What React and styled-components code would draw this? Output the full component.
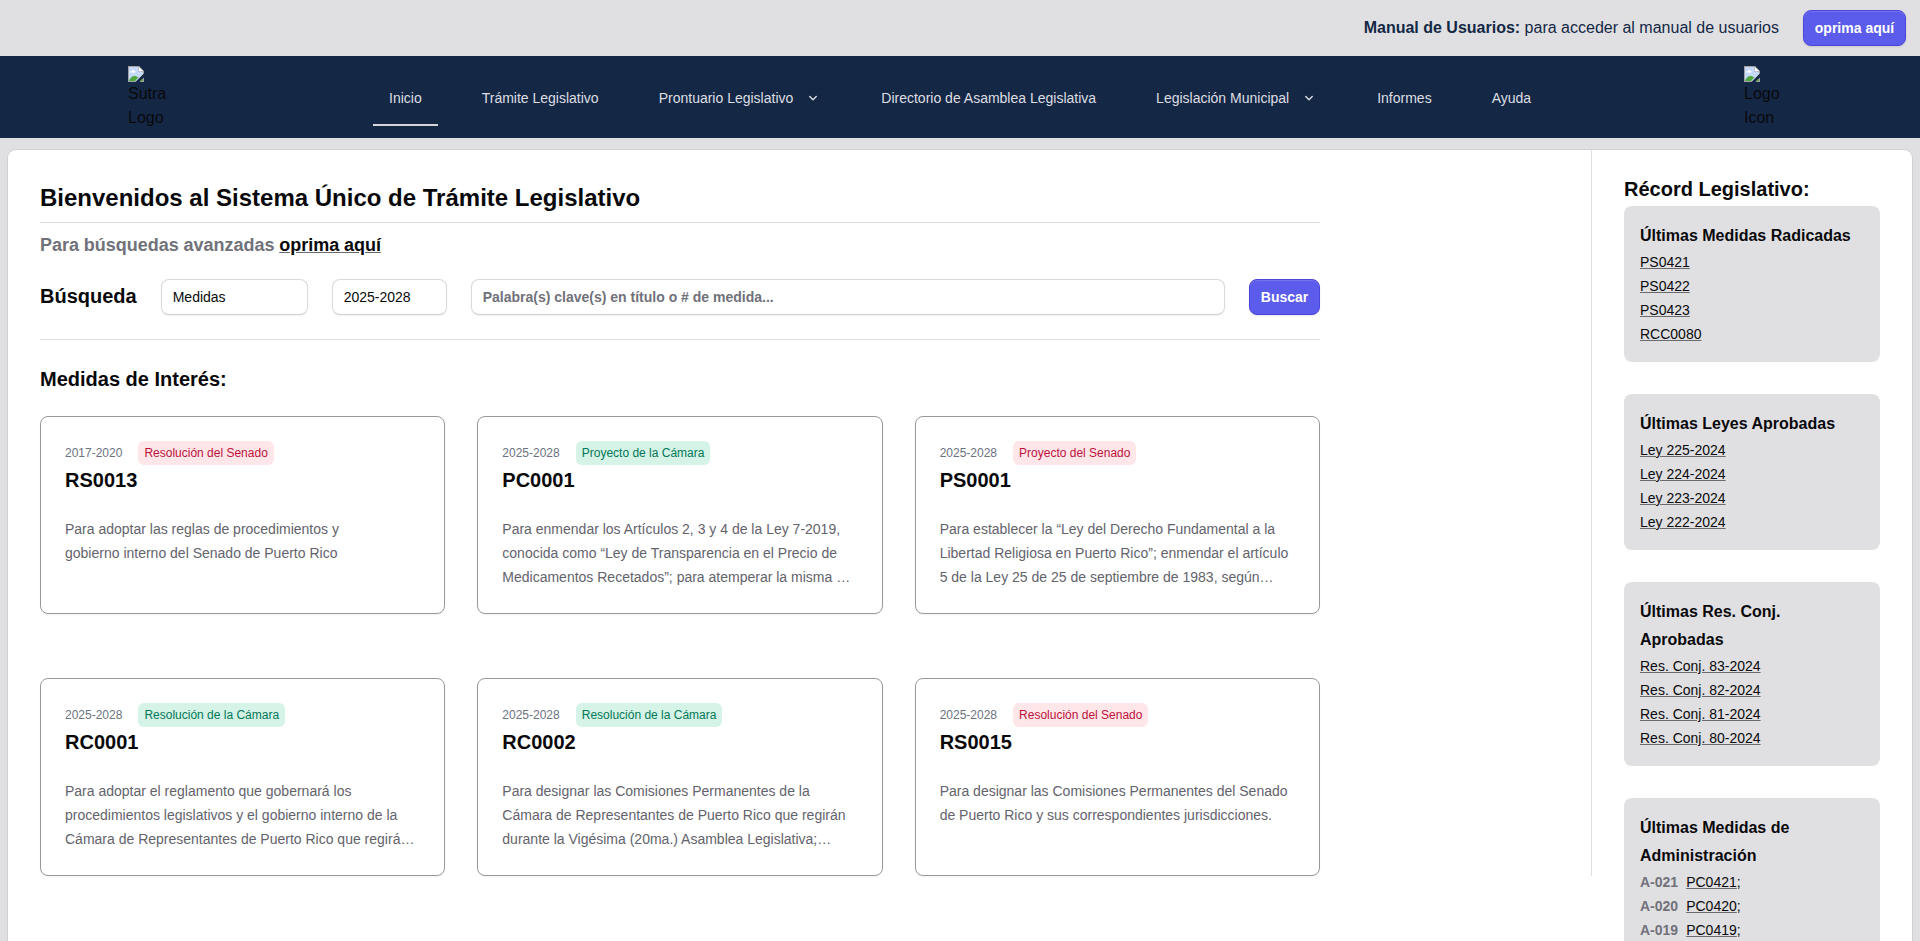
import React from "react";
import styled, { createGlobalStyle } from "styled-components";

const Global = createGlobalStyle`
  *, *::before, *::after { box-sizing: border-box; }
  html, body { margin: 0; padding: 0; }
  body {
    height: 941px;
    overflow: hidden;
    background: #e0e0e2;
    color: #09090b;
    font-family: "Liberation Sans", Arial, Helvetica, sans-serif;
    font-size: 16px;
    line-height: 24px;
    -webkit-font-smoothing: antialiased;
  }
  h1, h2, h3, p, ul { margin: 0; padding: 0; }
  ul { list-style: none; }
  button, input { font-family: inherit; }
`;

const Page = styled.div`
  display: flex;
  flex-direction: column;
  height: 941px;
  overflow: hidden;
`;

const TopBar = styled.div`
  display: flex;
  flex: none;
  align-items: center;
  justify-content: flex-end;
  gap: 24px;
  height: 56px;
  padding-right: 14px;
  color: #142846;
`;

const Button = styled.button`
  height: 36px;
  width: ${(p) => p.$width}px;
  padding: 0;
  border: 1px solid #4d46dd;
  border-radius: 8px;
  background: #5b5bec;
  box-shadow: inset 0 1px 0 rgba(255, 255, 255, 0.15), 0 1px 2px rgba(9, 9, 11, 0.1);
  color: #fff;
  font-size: 14px;
  font-weight: 700;
  line-height: 24px;
`;

const NavBar = styled.header`
  display: flex;
  flex: none;
  height: 82px;
  padding: 10px 128px 0;
  background: #142846;
`;

const LogoBox = styled.div`
  display: flex;
  flex-direction: column;
  flex: none;
  width: ${(p) => p.$width}px;
  line-height: 24px;

  svg { display: block; }
`;

const Nav = styled.nav`
  display: flex;
  flex: 1;
  gap: 28px;
  height: 60px;
  padding-left: 205px;
`;

const NavItem = styled.a`
  display: flex;
  align-items: center;
  gap: 12px;
  height: 60px;
  padding: 6px 16px 0;
  border-bottom: 2px solid ${(p) => (p.$active ? "#d6d6da" : "transparent")};
  color: #dedee2;
  font-size: 14px;
  white-space: nowrap;
`;

const Panel = styled.main`
  display: flex;
  flex: none;
  align-items: flex-start;
  height: 900px;
  margin: 12px 8px 0;
  border-radius: 8px;
  background: #fff;
  box-shadow: 0 0 0 1px #d0d0d3;
`;

const Content = styled.section`
  flex: none;
  width: 1584px;
  height: 726px;
  padding: 32px 0 0 32px;
  border-right: 1px solid #e0e0e2;
`;

const Column = styled.div`
  width: 1280px;
`;

const Title = styled.h1`
  height: 41px;
  border-bottom: 1px solid #dedee0;
  font-size: 24px;
  line-height: 32px;
`;

const Subtitle = styled.p`
  padding-top: 6px;
  color: #71717a;
  font-size: 18px;
  font-weight: 700;
  line-height: 32px;
  word-spacing: -0.3px;

  a { color: #09090b; text-decoration: underline; text-decoration-color: #6b6b6d; }
`;

const SearchRow = styled.div`
  display: flex;
  align-items: center;
  gap: 24px;
  height: 79px;
  padding-bottom: 7px;
  border-bottom: 1px solid #dedee0;
`;

const SectionTitle = styled.h2`
  font-size: 20px;
  line-height: 32px;
  ${(p) => p.$raised && "margin-bottom: 2px;"}
  ${(p) => p.$spaced && "padding-top: 23px;"}
`;

const Field = styled.div`
  flex: ${(p) => (p.$width ? "none" : 1)};
  width: ${(p) => (p.$width ? `${p.$width}px` : "auto")};
  height: 36px;
  padding: 5px 11px;
  border: 1px solid #dadadc;
  border-bottom-color: #cfcfd2;
  border-radius: 8px;
  background: #fff;
  box-shadow: 0 1px 2px rgba(0, 0, 0, 0.06);
  color: ${(p) => (p.$hint ? "#71717a" : "#09090b")};
  font-size: 14px;
  font-weight: ${(p) => (p.$hint ? 700 : 400)};
  line-height: 24px;
`;

const Cards = styled.div`
  display: grid;
  grid-template-columns: repeat(3, 1fr);
  gap: 64px 32px;
  padding-top: 21px;
`;

const Card = styled.article`
  height: 198px;
  padding: 24px;
  border: 1px solid #97979d;
  border-radius: 8px;
  box-shadow: 0 1px 2px rgba(0, 0, 0, 0.05);
`;

const CardMeta = styled.div`
  display: flex;
  align-items: center;
  gap: 16px;
  color: #6b7280;
  font-size: 12px;
`;

const Badge = styled.span`
  padding: 0 6px;
  border-radius: 6px;
  background: ${(p) => (p.$tone === "rose" ? "#ffe6e9" : "#d5f3e7")};
  color: ${(p) => (p.$tone === "rose" ? "#be123c" : "#047857")};
`;

const CardTitle = styled.h3`
  margin-bottom: 21px;
  font-size: 20px;
  line-height: 31px;
`;

const CardText = styled.p`
  color: #63636c;
  font-size: 14px;
  white-space: nowrap;
`;

const Sidebar = styled.aside`
  flex: 1;
  padding: 23px 32px 0;
`;

const Boxes = styled.div`
  display: flex;
  flex-direction: column;
  gap: 32px;
  padding-top: 1px;
`;

const Box = styled.section`
  padding: 16px;
  border-radius: 8px;
  background: #e0e0e2;
`;

const BoxTitle = styled.h3`
  font-size: 16px;
  line-height: 28px;
`;

const BoxItem = styled.li`
  display: flex;
  font-size: 14px;

  a { text-decoration: underline; text-decoration-color: #6b6b6d; }
`;

const Code = styled.span`
  margin-right: 8px;
  color: #71717a;
  font-weight: 700;
`;

const BrokenImage = () => (
  <svg width="16" height="16" viewBox="0 0 16 16">
    <path d="M0 0h11l5 5v2.500L7.500 16H0zM16 11.500V16h-4.500z" fill="#a3a3a3" />
    <path d="M1 1h9.500v4.500H15V8l-7 7H1z" fill="#c6d9f8" />
    <path d="M11 1l4 4h-4z" fill="#fff" />
    <path d="M2.500 6.500V5h1.500V4h2v1h1.500v1.500z" fill="#fff" />
    <path d="M1 15c.8-3 3-5 5.500-5 1.500 0 2.800.5 3.800 1.600L7 15zM12 15l2.200-2.200L15 15z" fill="#4fa83d" />
  </svg>
);

const Chevron = () => (
  <svg width="16" height="16" viewBox="0 0 16 16" fill="none" stroke="#dedee2" strokeWidth="1.4" strokeLinecap="round" strokeLinejoin="round">
    <path d="M4.750 6.500L8 9.750l3.250-3.250" />
  </svg>
);

const navItems = [
  { label: "Inicio", active: true },
  { label: "Trámite Legislativo" },
  { label: "Prontuario Legislativo", menu: true },
  { label: "Directorio de Asamblea Legislativa" },
  { label: "Legislación Municipal", menu: true },
  { label: "Informes" },
  { label: "Ayuda" },
];

const cards = [
  { term: "2017-2020", kind: "Resolución del Senado", tone: "rose", id: "RS0013", lines: ["Para adoptar las reglas de procedimientos y", "gobierno interno del Senado de Puerto Rico"] },
  { term: "2025-2028", kind: "Proyecto de la Cámara", tone: "green", id: "PC0001", lines: ["Para enmendar los Artículos 2, 3 y 4 de la Ley 7-2019,", "conocida como “Ley de Transparencia en el Precio de", "Medicamentos Recetados”; para atemperar la misma …"] },
  { term: "2025-2028", kind: "Proyecto del Senado", tone: "rose", id: "PS0001", lines: ["Para establecer la “Ley del Derecho Fundamental a la", "Libertad Religiosa en Puerto Rico”; enmendar el artículo", "5 de la Ley 25 de 25 de septiembre de 1983, según…"] },
  { term: "2025-2028", kind: "Resolución de la Cámara", tone: "green", id: "RC0001", lines: ["Para adoptar el reglamento que gobernará los", "procedimientos legislativos y el gobierno interno de la", "Cámara de Representantes de Puerto Rico que regirá…"] },
  { term: "2025-2028", kind: "Resolución de la Cámara", tone: "green", id: "RC0002", lines: ["Para designar las Comisiones Permanentes de la", "Cámara de Representantes de Puerto Rico que regirán", "durante la Vigésima (20ma.) Asamblea Legislativa;…"] },
  { term: "2025-2028", kind: "Resolución del Senado", tone: "rose", id: "RS0015", lines: ["Para designar las Comisiones Permanentes del Senado", "de Puerto Rico y sus correspondientes jurisdicciones."] },
];

const boxes = [
  { title: "Últimas Medidas Radicadas", items: [{ text: "PS0421" }, { text: "PS0422" }, { text: "PS0423" }, { text: "RCC0080" }] },
  { title: "Últimas Leyes Aprobadas", items: [{ text: "Ley 225-2024" }, { text: "Ley 224-2024" }, { text: "Ley 223-2024" }, { text: "Ley 222-2024" }] },
  { title: "Últimas Res. Conj. Aprobadas", items: [{ text: "Res. Conj. 83-2024" }, { text: "Res. Conj. 82-2024" }, { text: "Res. Conj. 81-2024" }, { text: "Res. Conj. 80-2024" }] },
  { title: "Últimas Medidas de Administración", items: [{ code: "A-021", text: "PC0421" }, { code: "A-020", text: "PC0420" }, { code: "A-019", text: "PC0419" }] },
];

export default function App() {
  return (
    <Page>
      <Global />
      <TopBar>
        <span><b>Manual de Usuarios:</b> para acceder al manual de usuarios</span>
        <Button $width={103}>oprima aquí</Button>
      </TopBar>
      <NavBar>
        <LogoBox $width={40}>
          <BrokenImage />
          <span>Sutra</span>
          <span>Logo</span>
        </LogoBox>
        <Nav>
          {navItems.map((item) => (
            <NavItem key={item.label} $active={item.active}>
              {item.label}
              {item.menu && <Chevron />}
            </NavItem>
          ))}
        </Nav>
        <LogoBox $width={48}>
          <BrokenImage />
          <span>Logo</span>
          <span>Icon</span>
        </LogoBox>
      </NavBar>
      <Panel>
        <Content>
          <Column>
            <Title>Bienvenidos al Sistema Único de Trámite Legislativo</Title>
            <Subtitle>Para búsquedas avanzadas <a>oprima aquí</a></Subtitle>
            <SearchRow>
              <SectionTitle $raised>Búsqueda</SectionTitle>
              <Field $width={147}>Medidas</Field>
              <Field $width={115}>2025-2028</Field>
              <Field $hint>Palabra(s) clave(s) en título o # de medida...</Field>
              <Button $width={71}>Buscar</Button>
            </SearchRow>
            <SectionTitle $spaced>Medidas de Interés:</SectionTitle>
            <Cards>
              {cards.map((card) => (
                <Card key={card.id}>
                  <CardMeta>
                    <span>{card.term}</span>
                    <Badge $tone={card.tone}>{card.kind}</Badge>
                  </CardMeta>
                  <CardTitle>{card.id}</CardTitle>
                  {card.lines.map((line) => (
                    <CardText key={line}>{line}</CardText>
                  ))}
                </Card>
              ))}
            </Cards>
          </Column>
        </Content>
        <Sidebar>
          <SectionTitle>Récord Legislativo:</SectionTitle>
          <Boxes>
            {boxes.map((box) => (
              <Box key={box.title}>
                <BoxTitle>{box.title}</BoxTitle>
                <ul>
                  {box.items.map((item) => (
                    <BoxItem key={item.text}>
                      {item.code && <Code>{item.code}</Code>}
                      <a>{item.text}</a>
                      {item.code && ";"}
                    </BoxItem>
                  ))}
                </ul>
              </Box>
            ))}
          </Boxes>
        </Sidebar>
      </Panel>
    </Page>
  );
}
